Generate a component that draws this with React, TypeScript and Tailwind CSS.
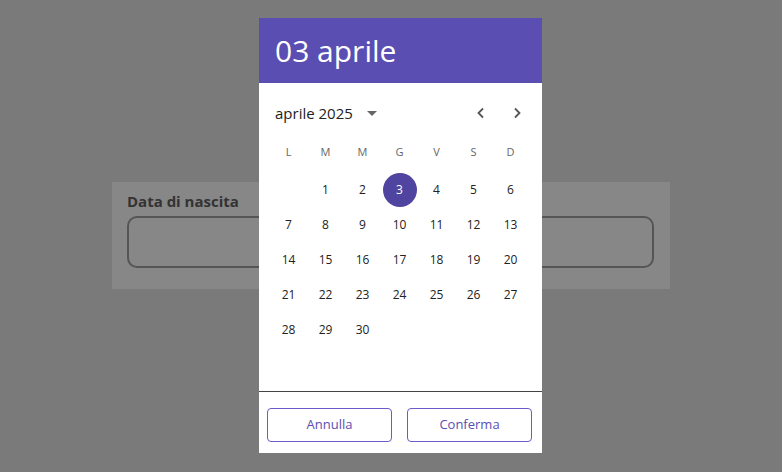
import React from "react";

const days: (number | null)[] = [null, ...Array.from({ length: 30 }, (_, i) => i + 1)];

export default function App() {
  const rows: (number | null)[][] = [];
  for (let i = 0; i < days.length; i += 7) rows.push(days.slice(i, i + 7));
  return (
    <div
      className="relative w-[782px] h-[472px] bg-[#7a7a7a] overflow-hidden"
      style={{ fontFamily: '"Open Sans", "Noto Sans", sans-serif' }}
    >
      <div className="pt-[182px] pl-[112px]">
        <div className="w-[558px] h-[107px] bg-[#878787] px-[15px] pt-[9px]">
          <div className="text-[15px] font-bold text-[#333] leading-[20px]">Data di nascita</div>
          <div className="mt-[5px] w-[527px] h-[52px] rounded-[10px] border-2 border-[#555]" />
        </div>
      </div>

      <div className="absolute left-[259px] top-[18px] w-[283px] h-[435px] bg-white flex flex-col">
        <div className="h-[65px] bg-[#5a4eb2] flex items-center pl-[16px]">
          <span className="text-white text-[30px] leading-none">03 aprile</span>
        </div>
        <div className="h-[60px] flex items-center pl-[16px] pr-[19px]">
          <span className="text-[15px] text-[#222]">aprile 2025</span>
          <svg width="10" height="5" viewBox="0 0 10 5" className="ml-[14px]">
            <path d="M0 0 L10 0 L5 5 Z" fill="#666" />
          </svg>
          <div className="ml-auto flex items-center gap-[24px] text-[#555]">
            <svg width="12" height="12" viewBox="0 0 12 12">
              <path d="M8 1.5 L3.5 6 L8 10.5" fill="none" stroke="#555" strokeWidth="1.8" />
            </svg>
            <svg width="12" height="12" viewBox="0 0 12 12">
              <path d="M4 1.5 L8.5 6 L4 10.5" fill="none" stroke="#555" strokeWidth="1.8" />
            </svg>
          </div>
        </div>
        <div className="pl-[11px] pr-[13px]">
          <div className="grid grid-cols-7 h-[20px] items-center mt-[-1px]">
            {["L", "M", "M", "G", "V", "S", "D"].map((d, i) => (
              <div key={i} className="text-center text-[11px] text-[#666]">
                {d}
              </div>
            ))}
          </div>
          <div className="mt-[10px]">
            {rows.map((r, ri) => (
              <div key={ri} className="grid grid-cols-7 h-[35px]">
                {r.map((d, ci) => (
                  <div key={ci} className="flex items-center justify-center">
                    {d === 3 ? (
                      <div className="w-[34px] h-[34px] rounded-full bg-[#4f44a0] text-white text-[12px] flex items-center justify-center">
                        3
                      </div>
                    ) : (
                      <span className="text-[12px] text-[#222]">{d ?? ""}</span>
                    )}
                  </div>
                ))}
              </div>
            ))}
          </div>
        </div>
        <div className="mt-auto border-t-[1.5px] border-[#444] h-[62px] flex items-start justify-between pl-[8px] pr-[10px] pt-[16px]">
          <button className="w-[125px] h-[34px] rounded-[4px] border border-[#6a5cc8] text-[#5a4eb2] text-[13px]">
            Annulla
          </button>
          <button className="w-[125px] h-[34px] rounded-[4px] border border-[#6a5cc8] text-[#5a4eb2] text-[13px]">
            Conferma
          </button>
        </div>
      </div>
    </div>
  );
}
